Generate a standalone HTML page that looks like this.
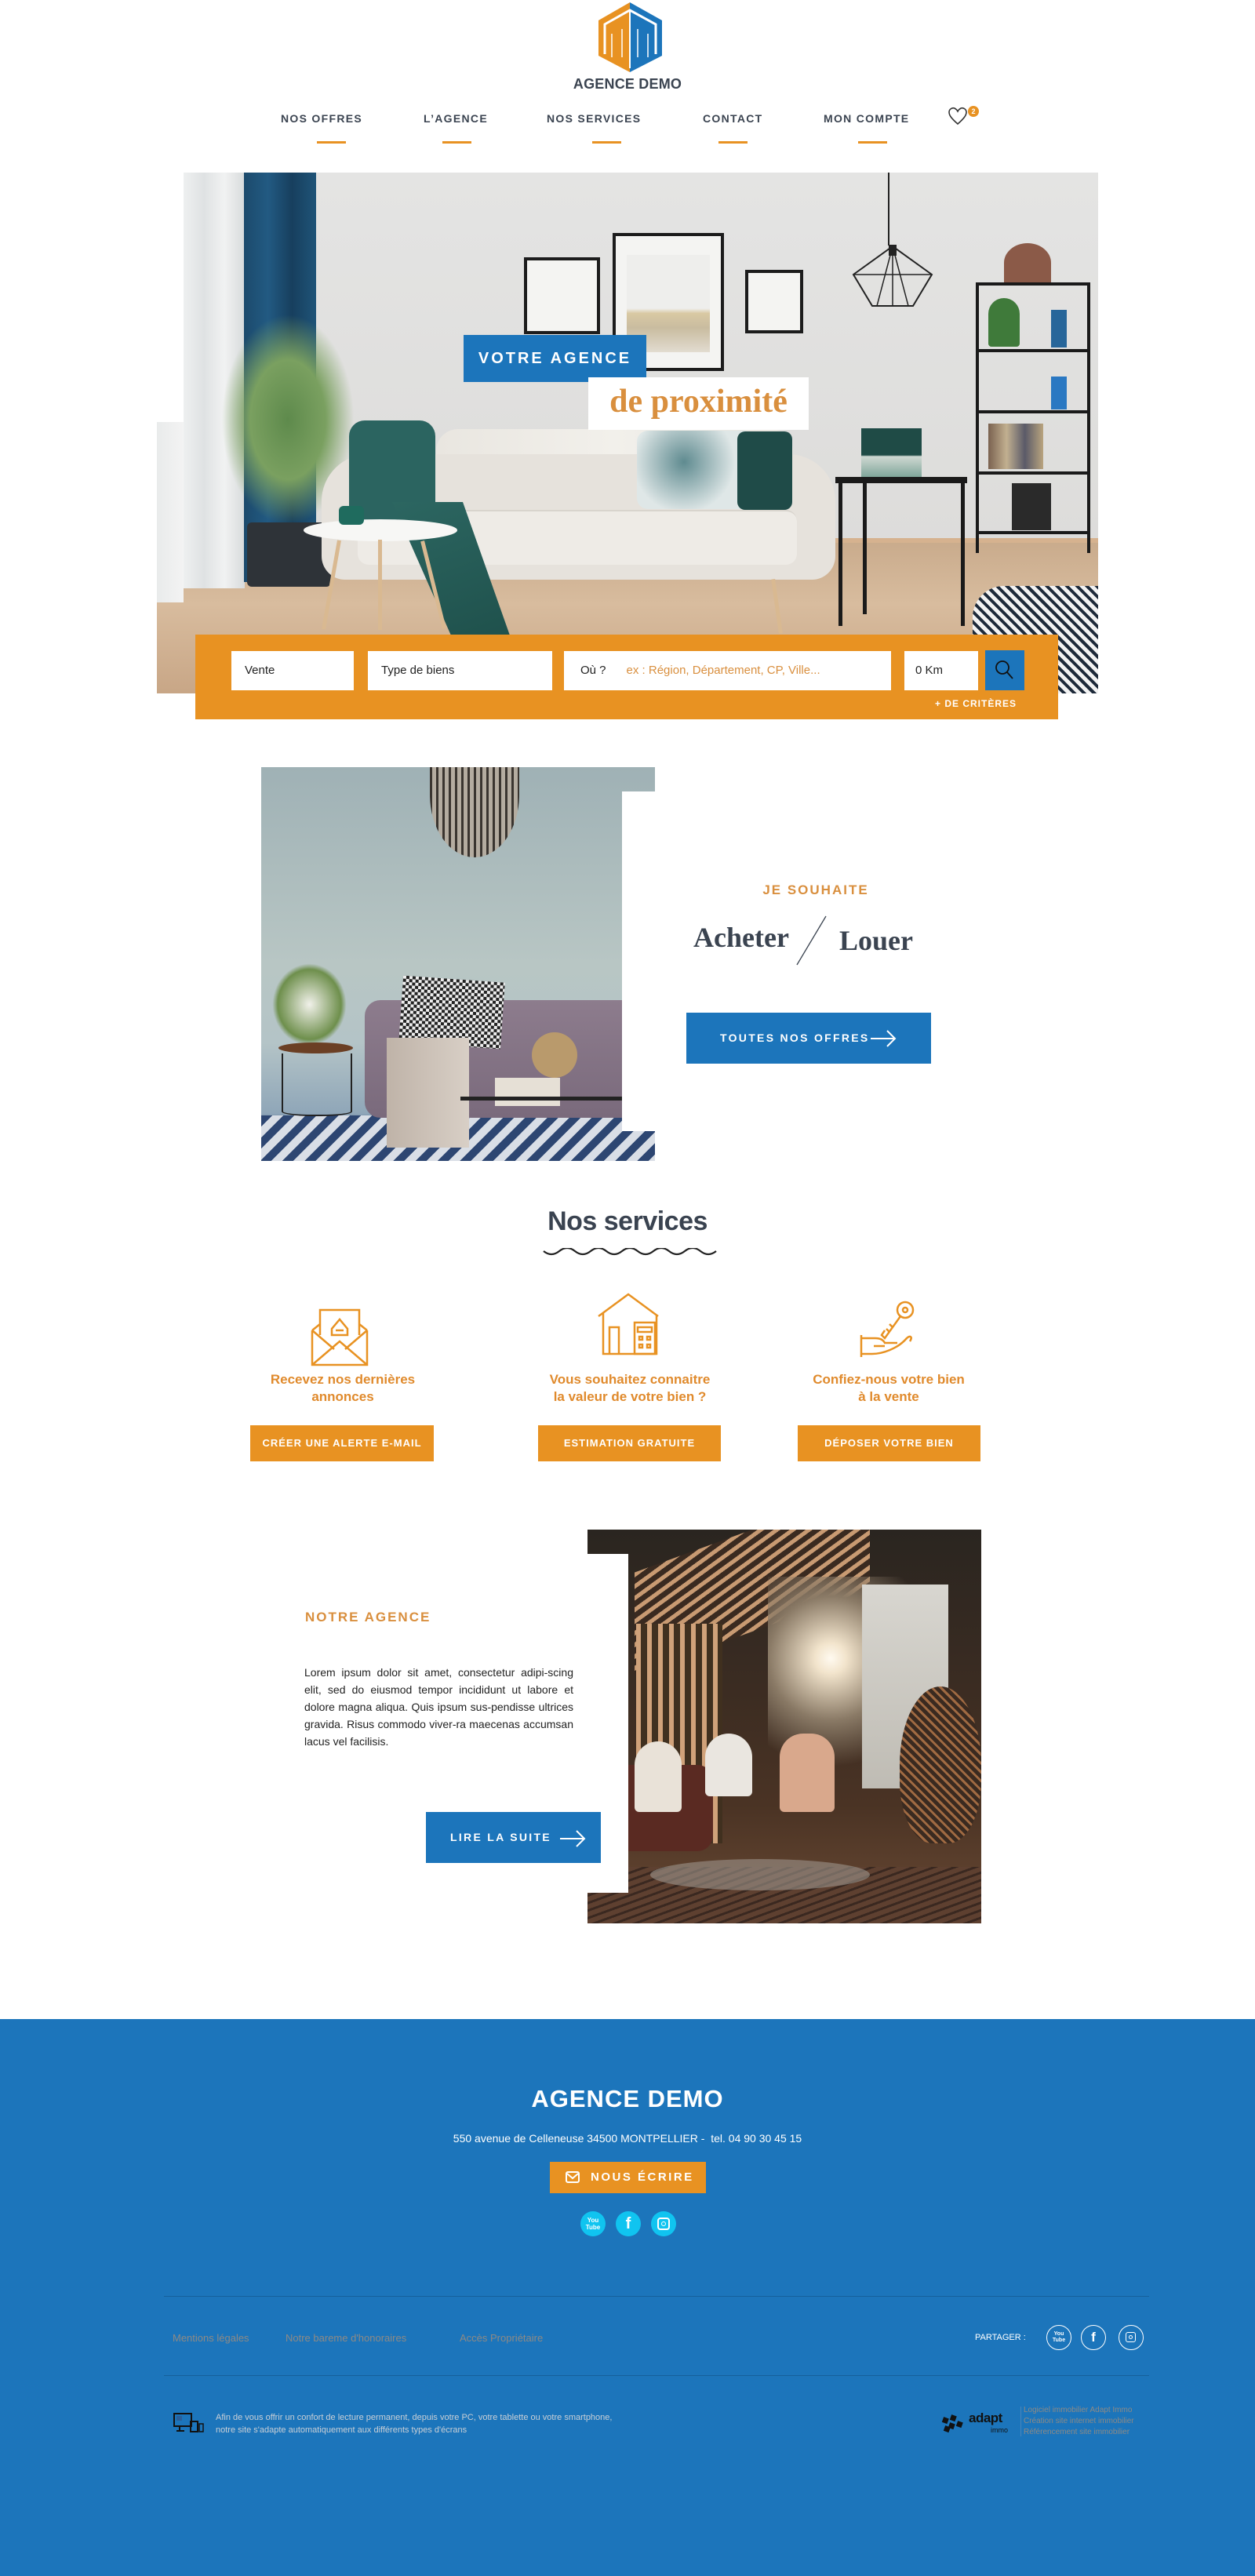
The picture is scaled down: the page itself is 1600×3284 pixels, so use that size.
<!DOCTYPE html>
<html><head><meta charset="utf-8">
<style>
*{margin:0;padding:0;box-sizing:border-box}
body{width:1600px;height:3284px;position:relative;background:#fff;font-family:"Liberation Sans",sans-serif;overflow:hidden}
.a{position:absolute}
.nav{position:absolute;top:143px;font-size:14px;font-weight:bold;letter-spacing:1.3px;color:#3a4350;white-space:nowrap}
.ul{position:absolute;top:180px;width:37px;height:3px;background:#e89222}
.inp{position:absolute;top:830px;height:50px;background:#fff;font-size:15px;color:#222;line-height:50px;padding-left:17px}
.btnO{position:absolute;background:#e89222;color:#fff;font-size:13px;font-weight:bold;letter-spacing:1px;text-align:center}
.svc{position:absolute;top:1748px;width:320px;text-align:center;color:#e08a2c;font-size:17px;font-weight:bold;line-height:22px}
.fl{position:absolute;top:2973px;font-size:13px;color:#8d8a86}
</style></head><body>

<!-- logo -->
<svg class="a" style="left:762px;top:3px" width="84" height="92" viewBox="0 0 84 92">
<polygon points="41,0 41,89 1,68 1,23" fill="#e89222"/>
<polygon points="41,0 82,23 82,68 41,89" fill="#1c75bb"/>
<path d="M9,66 V28 L41,10 L74,28 V66" fill="none" stroke="#fff" stroke-width="3"/>
<path d="M41,10 V84" stroke="#fff" stroke-width="2"/>
<rect x="14" y="36" width="8" height="34" fill="#e89222"/>
<rect x="26" y="30" width="10" height="40" fill="#e89222"/>
<rect x="46" y="30" width="10" height="40" fill="#1c75bb"/>
<rect x="60" y="36" width="8" height="34" fill="#1c75bb"/>
<path d="M18,40 V70 M31,34 V70 M51,34 V70 M64,40 V70" stroke="#fff" stroke-width="1.5"/>
</svg>
<div class="a" style="left:700px;top:97px;width:200px;text-align:center;font-size:18px;color:#3a4350;font-weight:bold;letter-spacing:0.2px">AGENCE DEMO</div>

<div class="nav" style="left:358px">NOS OFFRES</div><div class="ul" style="left:404px"></div>
<div class="nav" style="left:540px">L’AGENCE</div><div class="ul" style="left:564px"></div>
<div class="nav" style="left:697px">NOS SERVICES</div><div class="ul" style="left:755px"></div>
<div class="nav" style="left:896px">CONTACT</div><div class="ul" style="left:916px"></div>
<div class="nav" style="left:1050px">MON COMPTE</div><div class="ul" style="left:1094px"></div>
<svg class="a" style="left:1208px;top:136px" width="26" height="24" viewBox="0 0 26 24"><path d="M13,22 C5,15 2,11 2,7 C2,3 6,1 9,2 C11,3 12,4 13,6 C14,4 15,3 17,2 C20,1 24,3 24,7 C24,11 21,15 13,22Z" fill="none" stroke="#333" stroke-width="1.6"/></svg>
<div class="a" style="left:1234px;top:135px;width:14px;height:14px;border-radius:7px;background:#e89222;color:#fff;font-size:9px;font-weight:bold;text-align:center;line-height:14px">2</div>

<!-- hero -->
<div class="a" style="left:200px;top:220px;width:1200px;height:664px;overflow:hidden;background:linear-gradient(#e4e4e3,#dad9d7)">
  <div class="a" style="left:0;top:470px;width:1200px;height:200px;background:linear-gradient(#c9ab8c,#d8bc9e 40%,#c7a585)"></div>
  <div class="a" style="left:0;top:466px;width:1200px;height:6px;background:#d6b28f"></div>
  <div class="a" style="left:0;top:0;width:34px;height:318px;background:#fff"></div>
  <div class="a" style="left:34px;top:0;width:78px;height:530px;background:linear-gradient(90deg,#eef0f0,#dfe2e3,#f1f2f2,#d8dbdc)"></div>
  <div class="a" style="left:0;top:318px;width:34px;height:230px;background:linear-gradient(90deg,#e9ebeb,#f3f3f3)"></div>
  <div class="a" style="left:111px;top:0;width:92px;height:522px;background:linear-gradient(90deg,#1c4a6c,#225a82,#173f5e,#1f5478)"></div>
  <div class="a" style="left:468px;top:108px;width:97px;height:98px;border:4px solid #1c1c1c;background:#f4f4f2"></div>
  <div class="a" style="left:581px;top:77px;width:142px;height:176px;border:4px solid #1c1c1c;background:#f4f4f2"><div class="a" style="left:14px;top:24px;width:106px;height:124px;background:linear-gradient(#eeeeec 55%,#d9c9a3 60%,#c9bca0 75%,#e2dcd0)"></div></div>
  <div class="a" style="left:750px;top:124px;width:74px;height:81px;border:4px solid #1c1c1c;background:#f4f4f2"></div>
  <div class="a" style="left:932px;top:0;width:2px;height:93px;background:#222"></div>
  <svg class="a" style="left:878px;top:90px" width="120" height="84"><polygon points="60,4 110,40 86,80 34,80 10,40" fill="none" stroke="#222" stroke-width="2"/><path d="M60,4 L40,80 M60,4 L80,80 M10,40 H110 M60,4 V80" stroke="#222" stroke-width="1.5"/><rect x="55" y="2" width="10" height="14" fill="#222"/></svg>
  <div class="a" style="left:1044px;top:140px;width:146px;height:345px;border-left:4px solid #1a1a1a;border-right:4px solid #1a1a1a"></div>
  <div class="a" style="left:1044px;top:140px;width:146px;height:4px;background:#1a1a1a"></div>
  <div class="a" style="left:1044px;top:225px;width:146px;height:4px;background:#1a1a1a"></div>
  <div class="a" style="left:1044px;top:303px;width:146px;height:4px;background:#1a1a1a"></div>
  <div class="a" style="left:1044px;top:381px;width:146px;height:4px;background:#1a1a1a"></div>
  <div class="a" style="left:1044px;top:457px;width:146px;height:4px;background:#1a1a1a"></div>
  <div class="a" style="left:1060px;top:160px;width:40px;height:62px;border-radius:20px 20px 4px 4px;background:#3f7a3a"></div>
  <div class="a" style="left:1140px;top:175px;width:20px;height:48px;background:#27669a"></div>
  <div class="a" style="left:1140px;top:260px;width:20px;height:42px;background:#2a78c2"></div>
  <div class="a" style="left:1060px;top:320px;width:70px;height:58px;background:linear-gradient(90deg,#7a6250,#c2b090,#5a5a68,#b9a47e)"></div>
  <div class="a" style="left:1090px;top:396px;width:50px;height:60px;background:#2a2a2a"></div>
  <div class="a" style="left:1080px;top:90px;width:60px;height:50px;border-radius:50% 50% 0 0;background:#8b5a48"></div>
  <div class="a" style="left:82px;top:180px;width:170px;height:270px;border-radius:50% 50% 30% 30%;background:radial-gradient(ellipse at 50% 50%,#5e8a4c 0%,#7aa060 40%,rgba(120,160,100,0) 70%)"></div>
  <div class="a" style="left:115px;top:446px;width:107px;height:82px;border-radius:6px;background:#2e3338"></div>
  <div class="a" style="left:356px;top:327px;width:455px;height:110px;border-radius:28px 28px 0 0;background:linear-gradient(90deg,#e9e6e0,#f2f0eb,#e7e4de)"></div>
  <div class="a" style="left:210px;top:359px;width:655px;height:160px;border-radius:60px 60px 30px 30px;background:#e6e2dc"></div>
  <div class="a" style="left:256px;top:430px;width:560px;height:70px;border-radius:14px;background:#eeebe6;border-top:2px solid #d8d4cd"></div>
  <div class="a" style="left:612px;top:329px;width:150px;height:100px;border-radius:14px;background:radial-gradient(circle at 40% 40%,#5f8b90,#dfe7e7 60%)"></div>
  <div class="a" style="left:740px;top:330px;width:70px;height:100px;border-radius:10px;background:#1f4b48"></div>
  <div class="a" style="left:245px;top:316px;width:110px;height:140px;border-radius:20px;background:#2b6460"></div>
  <div class="a" style="left:300px;top:420px;width:150px;height:170px;background:linear-gradient(160deg,#2c6661,#1f514c);clip-path:polygon(0 0,60% 0,100% 100%,50% 100%)"></div>
  <div class="a" style="left:187px;top:442px;width:196px;height:28px;border-radius:50%;background:#f7f7f5"></div>
  <div class="a" style="left:232px;top:425px;width:32px;height:24px;border-radius:6px;background:#1f6b5e"></div>
  <div class="a" style="left:220px;top:468px;width:5px;height:115px;background:#d9b991;transform:rotate(10deg)"></div>
  <div class="a" style="left:282px;top:468px;width:5px;height:115px;background:#d9b991"></div>
  <div class="a" style="left:350px;top:468px;width:5px;height:115px;background:#d9b991;transform:rotate(-14deg)"></div>
  <div class="a" style="left:788px;top:518px;width:5px;height:70px;background:#d9b991;transform:rotate(-8deg)"></div>
  <div class="a" style="left:865px;top:388px;width:168px;height:8px;background:#1a1a1a"></div>
  <div class="a" style="left:869px;top:388px;width:5px;height:190px;background:#1a1a1a"></div>
  <div class="a" style="left:1025px;top:388px;width:5px;height:190px;background:#1a1a1a"></div>
  <div class="a" style="left:900px;top:388px;width:5px;height:175px;background:#1a1a1a"></div>
  <div class="a" style="left:898px;top:326px;width:77px;height:62px;background:linear-gradient(#1f4b46,#1f4b46 55%,#cfd8d2 58%,#7fa69a)"></div>
  <div class="a" style="left:1040px;top:527px;width:170px;height:150px;border-radius:40px 0 0 0;background:repeating-linear-gradient(45deg,#1e2a3a 0 4px,#f2f2f2 4px 9px)"></div>
</div>
<div class="a" style="left:591px;top:427px;width:233px;height:60px;background:#1c75bb;color:#fff;font-size:20px;font-weight:bold;letter-spacing:3px;line-height:60px;text-align:center">VOTRE AGENCE</div>
<div class="a" style="left:750px;top:481px;width:281px;height:67px;background:#fff;color:#d98f3e;font-family:'Liberation Serif',serif;font-size:42px;font-weight:bold;line-height:62px;text-align:center">de proximité</div>

<div class="a" style="left:249px;top:809px;width:1100px;height:108px;background:#e89222"></div>
<div class="inp" style="left:295px;width:156px">Vente</div>
<div class="inp" style="left:469px;width:235px">Type de biens</div>
<div class="inp" style="left:719px;width:417px;padding-left:21px">Où ?<span style="color:#d98f3e;margin-left:26px">ex : Région, Département, CP, Ville...</span></div>
<div class="inp" style="left:1153px;width:94px;padding-left:14px">0 Km</div>
<div class="a" style="left:1256px;top:829px;width:50px;height:51px;background:#1c75bb"></div>
<svg class="a" style="left:1266px;top:839px" width="30" height="30"><circle cx="12" cy="12" r="8" fill="none" stroke="#111" stroke-width="1.8"/><path d="M18,18 L25,26" stroke="#111" stroke-width="1.8"/></svg>
<div class="a" style="left:1192px;top:890px;font-size:12px;font-weight:bold;color:#fff;letter-spacing:1px">+ DE CRITÈRES</div>

<div class="a" style="left:333px;top:978px;width:502px;height:502px;overflow:hidden;background:linear-gradient(#9fb1b5,#b8c6c4 50%,#b4c4c7 70%,#8fa6b8 88%,#2f4870 92%)">
  <div class="a" style="left:0;top:444px;width:502px;height:58px;background:repeating-linear-gradient(135deg,#2d4672 0 10px,#d9dee6 10px 20px)"></div>
  <div class="a" style="left:215px;top:0;width:114px;height:115px;border-radius:0 0 57px 57px / 0 0 80px 80px;background:repeating-linear-gradient(90deg,#3a3530 0 3px,#b4aca0 3px 8px)"></div>
  <div class="a" style="left:132px;top:297px;width:370px;height:150px;border-radius:20px 0 0 20px;background:linear-gradient(#8d7c8d,#7a6a7c)"></div>
  <div class="a" style="left:178px;top:270px;width:130px;height:85px;background:repeating-conic-gradient(#222 0 25%,#eee 0 50%) 0 0/8px 8px;transform:rotate(4deg)"></div>
  <div class="a" style="left:160px;top:345px;width:105px;height:140px;background:linear-gradient(90deg,#bfb3a8,#d8cfc6)"></div>
  <div class="a" style="left:14px;top:250px;width:95px;height:105px;border-radius:50%;background:radial-gradient(#f1f1ea,#6e8f4c 60%,rgba(0,0,0,0) 70%)"></div>
  <div class="a" style="left:22px;top:351px;width:95px;height:14px;border-radius:50%;background:#6b3f24"></div>
  <div class="a" style="left:26px;top:365px;width:90px;height:80px;border:2px solid #222;border-top:none;border-radius:0 0 40px 40px / 0 0 6px 6px"></div>
  <div class="a" style="left:298px;top:396px;width:83px;height:36px;background:#e6e0d6"></div>
  <div class="a" style="left:345px;top:338px;width:58px;height:58px;border-radius:50%;background:#b99a6c"></div>
  <div class="a" style="left:254px;top:420px;width:248px;height:5px;background:#222"></div>
</div>
<div class="a" style="left:793px;top:1009px;width:42px;height:433px;background:#fff"></div>
<div class="a" style="left:930px;top:1125px;width:220px;text-align:center;font-size:17px;font-weight:bold;letter-spacing:2px;color:#d98f3e">JE SOUHAITE</div>
<div class="a" style="left:884px;top:1174px;font-family:'Liberation Serif',serif;font-size:36px;font-weight:bold;color:#3a4350">Acheter</div>
<svg class="a" style="left:1012px;top:1166px" width="45" height="66"><path d="M41,2 L4,64" stroke="#3a4350" stroke-width="1.3"/></svg>
<div class="a" style="left:1070px;top:1178px;font-family:'Liberation Serif',serif;font-size:36px;font-weight:bold;color:#3a4350">Louer</div>
<div class="a" style="left:875px;top:1291px;width:312px;height:65px;background:#1c75bb"></div>
<div class="a" style="left:918px;top:1315px;font-size:14px;font-weight:bold;letter-spacing:2.3px;color:#fff">TOUTES NOS OFFRES</div>
<svg class="a" style="left:1108px;top:1312px" width="36" height="24"><path d="M2,12 H33 M23,2 L33,12 L23,22" fill="none" stroke="#fff" stroke-width="2"/></svg>

<div class="a" style="left:600px;top:1538px;width:400px;text-align:center;font-size:34px;font-weight:bold;color:#3a4350;letter-spacing:-0.5px">Nos services</div>
<svg class="a" style="left:692px;top:1591px" width="222" height="14"><path d="M1,4 q10,8 20,0 t20,0 t20,0 t20,0 t20,0 t20,0 t20,0 t20,0 t20,0 t20,0 t20,0" fill="none" stroke="#222" stroke-width="2.2"/></svg>

<svg class="a" style="left:396px;top:1668px" width="74" height="74" viewBox="0 0 74 74" fill="none" stroke="#e89222" stroke-width="2.5">
<path d="M2,28 L12,20 M72,28 L62,20 M2,28 V72 H72 V28 M2,28 L30,52 M72,28 L44,52 M2,72 L37,42 L72,72"/>
<path d="M12,34 V2 H62 V34"/><path d="M37,14 L27,26 V34 H47 V26 Z"/><path d="M32,28 H42"/>
</svg>
<svg class="a" style="left:761px;top:1648px" width="80" height="80" viewBox="0 0 80 80" fill="none" stroke="#e89222" stroke-width="2.5">
<path d="M2,30 L40,2 L78,30 M8,26 V78 H76 V28"/><path d="M16,78 V44 H28 V78"/><rect x="48" y="38" width="26" height="40"/><path d="M52,44 H70 V50 H52Z M54,56 h4 v4 h-4z M64,56 h4 v4 h-4z M54,66 h4 v4 h-4z M64,66 h4 v4 h-4z"/>
</svg>
<svg class="a" style="left:1094px;top:1656px" width="80" height="76" viewBox="0 0 80 76" fill="none" stroke="#e89222" stroke-width="2.5">
<circle cx="60" cy="14" r="10"/><circle cx="60" cy="14" r="3"/><path d="M54,22 L34,50 L30,46 L34,40 M40,42 L36,38 M44,36 L40,32"/>
<path d="M4,46 V74 M4,50 H22 C28,50 32,52 34,56 H50 M34,60 H20 M4,70 L18,70 C30,70 50,64 62,50 C66,46 70,48 66,54"/>
</svg>
<div class="svc" style="left:277px">Recevez nos dernières<br>annonces</div>
<div class="svc" style="left:643px">Vous souhaitez connaitre<br>la valeur de votre bien ?</div>
<div class="svc" style="left:973px">Confiez-nous votre bien<br>à la vente</div>
<div class="btnO" style="left:319px;top:1817px;width:234px;height:46px;line-height:46px">CRÉER UNE ALERTE E-MAIL</div>
<div class="btnO" style="left:686px;top:1817px;width:233px;height:46px;line-height:46px">ESTIMATION GRATUITE</div>
<div class="btnO" style="left:1017px;top:1817px;width:233px;height:46px;line-height:46px">DÉPOSER VOTRE BIEN</div>

<div class="a" style="left:749px;top:1950px;width:502px;height:502px;overflow:hidden;background:linear-gradient(#2a2520,#3b2c22 40%,#4a3324 70%,#6b4a34)">
  <div class="a" style="left:60px;top:0;width:300px;height:130px;background:repeating-linear-gradient(160deg,#c89a72 0 6px,#3a2a20 6px 14px);transform:skewY(-20deg)"></div>
  <div class="a" style="left:62px;top:120px;width:110px;height:280px;background:repeating-linear-gradient(90deg,#d0a27a 0 6px,#40301f 6px 14px)"></div>
  <div class="a" style="left:230px;top:60px;width:200px;height:260px;background:radial-gradient(circle at 40% 40%,#fffaf0 0,#f2e4cc 10%,#8a7a66 40%,rgba(60,50,40,0) 70%)"></div>
  <div class="a" style="left:350px;top:70px;width:110px;height:260px;background:linear-gradient(#d8d6d0,#bfbcb4)"></div>
  <div class="a" style="left:398px;top:200px;width:104px;height:200px;border-radius:50% 50% 40% 40%;background:repeating-linear-gradient(45deg,#a06a42 0 3px,#3a2a20 3px 8px)"></div>
  <div class="a" style="left:20px;top:300px;width:140px;height:110px;border-radius:20px;background:#5a2a22"></div>
  <div class="a" style="left:60px;top:270px;width:60px;height:90px;border-radius:30px 30px 6px 6px;background:#e9e2d8"></div>
  <div class="a" style="left:150px;top:260px;width:60px;height:80px;border-radius:30px 30px 6px 6px;background:#eae6e0"></div>
  <div class="a" style="left:245px;top:260px;width:70px;height:100px;border-radius:30px 30px 6px 6px;background:#d9a88c"></div>
  <div class="a" style="left:0;top:430px;width:502px;height:72px;background:repeating-linear-gradient(160deg,#5e4030 0 6px,#3a2820 6px 9px)"></div>
  <div class="a" style="left:80px;top:420px;width:280px;height:40px;border-radius:50%;background:#9d958c;opacity:0.6"></div>
</div>
<div class="a" style="left:749px;top:1981px;width:52px;height:432px;background:#fff"></div>
<div class="a" style="left:389px;top:2052px;font-size:17px;font-weight:bold;letter-spacing:2px;color:#d98f3e">NOTRE AGENCE</div>
<div class="a" style="left:388px;top:2121px;width:343px;font-size:14px;line-height:22px;color:#222;text-align:justify">Lorem ipsum dolor sit amet, consectetur adipi-scing elit, sed do eiusmod tempor incididunt ut labore et dolore magna aliqua. Quis ipsum sus-pendisse ultrices gravida. Risus commodo viver-ra maecenas accumsan lacus vel facilisis.</div>
<div class="a" style="left:543px;top:2310px;width:223px;height:65px;background:#1c75bb"></div>
<div class="a" style="left:574px;top:2334px;font-size:14px;font-weight:bold;letter-spacing:2.3px;color:#fff">LIRE LA SUITE</div>
<svg class="a" style="left:712px;top:2332px" width="36" height="24"><path d="M2,12 H33 M23,2 L33,12 L23,22" fill="none" stroke="#fff" stroke-width="2"/></svg>

<div class="a" style="left:0;top:2574px;width:1600px;height:710px;background:#1c75bb"></div>
<div class="a" style="left:600px;top:2658px;width:400px;text-align:center;font-size:31px;font-weight:bold;color:#fff;letter-spacing:1px">AGENCE DEMO</div>
<div class="a" style="left:500px;top:2718px;width:600px;text-align:center;font-size:14px;color:#fff">550 avenue de Celleneuse 34500 MONTPELLIER -&nbsp; tel. 04 90 30 45 15</div>
<div class="a" style="left:701px;top:2756px;width:199px;height:40px;background:#e89222"></div>
<svg class="a" style="left:721px;top:2768px" width="18" height="16"><rect x="1" y="1" width="16" height="13" rx="2" fill="none" stroke="#fff" stroke-width="2"/><path d="M2,3 L9,9 L16,3" fill="none" stroke="#fff" stroke-width="2"/></svg>
<div class="a" style="left:753px;top:2767px;font-size:15px;font-weight:bold;letter-spacing:2.5px;color:#fff">NOUS ÉCRIRE</div>
<div class="a" style="left:740px;top:2819px;width:32px;height:32px;border-radius:50%;background:#10c4f0;color:#fff;font-size:8px;font-weight:bold;text-align:center;line-height:9px;padding-top:7px">You<br>Tube</div>
<div class="a" style="left:785px;top:2819px;width:32px;height:32px;border-radius:50%;background:#10c4f0;color:#fff;font-size:20px;font-weight:bold;text-align:center;line-height:32px">f</div>
<div class="a" style="left:830px;top:2819px;width:32px;height:32px;border-radius:50%;background:#10c4f0"><div class="a" style="left:8px;top:8px;width:16px;height:16px;border:2px solid #fff;border-radius:4px"></div><div class="a" style="left:13px;top:13px;width:6px;height:6px;border:1.5px solid #fff;border-radius:50%"></div></div>

<div class="a" style="left:209px;top:2927px;width:1256px;height:1px;background:#16609b"></div>
<div class="fl" style="left:220px">Mentions légales</div>
<div class="fl" style="left:364px">Notre bareme d'honoraires</div>
<div class="fl" style="left:586px">Accès Propriétaire</div>
<div class="a" style="left:1243px;top:2974px;font-size:11px;color:#fff">PARTAGER :</div>
<div class="a" style="left:1334px;top:2964px;width:32px;height:32px;border:1.5px solid #fff;border-radius:50%;color:#fff;font-size:7px;font-weight:bold;text-align:center;line-height:8px;padding-top:7px">You<br>Tube</div>
<div class="a" style="left:1378px;top:2964px;width:32px;height:32px;border:1.5px solid #fff;border-radius:50%;color:#fff;font-size:17px;font-weight:bold;text-align:center;line-height:29px">f</div>
<div class="a" style="left:1426px;top:2964px;width:32px;height:32px;border:1.5px solid #fff;border-radius:50%"><div class="a" style="left:8px;top:8px;width:13px;height:13px;border:1.5px solid #fff;border-radius:3px"></div><div class="a" style="left:12px;top:12px;width:5px;height:5px;border:1.2px solid #fff;border-radius:50%"></div></div>
<div class="a" style="left:209px;top:3028px;width:1256px;height:1px;background:#16609b"></div>

<svg class="a" style="left:221px;top:3076px" width="40" height="25"><rect x="1" y="1" width="22" height="16" fill="none" stroke="#111" stroke-width="2"/><rect x="4" y="4" width="7" height="6" fill="#2a5f9a"/><path d="M8,18 V22 M4,23 H14" stroke="#111" stroke-width="2"/><rect x="22" y="11" width="9" height="13" fill="none" stroke="#111" stroke-width="2"/><rect x="33" y="14" width="5" height="10" fill="none" stroke="#111" stroke-width="1.5"/></svg>
<div class="a" style="left:275px;top:3074px;font-size:11px;line-height:16px;color:#c9cfd6">Afin de vous offrir un confort de lecture permanent, depuis votre PC, votre tablette ou votre smartphone,<br>notre site s'adapte automatiquement aux différents types d'écrans</div>
<svg class="a" style="left:1200px;top:3078px" width="32" height="24"><g fill="#111"><rect x="2" y="4" width="7" height="7" transform="rotate(20 5 7)"/><rect x="12" y="1" width="7" height="7" transform="rotate(20 15 4)"/><rect x="10" y="11" width="7" height="7" transform="rotate(20 13 14)"/><rect x="20" y="9" width="7" height="7" transform="rotate(20 23 12)"/><rect x="4" y="15" width="7" height="7" transform="rotate(20 7 18)"/></g></svg>
<div class="a" style="left:1235px;top:3073px;font-size:17px;font-weight:bold;color:#111;letter-spacing:-0.5px">adapt</div>
<div class="a" style="left:1263px;top:3093px;font-size:9px;color:#111">immo</div>
<div class="a" style="left:1301px;top:3068px;width:1px;height:38px;background:#4a87bb"></div>
<div class="a" style="left:1305px;top:3066px;font-size:10px;line-height:14px;color:#8d8a86;white-space:nowrap">Logiciel immobilier Adapt Immo<br>Création site internet immobilier<br>Référencement site immobilier</div>
</body></html>
